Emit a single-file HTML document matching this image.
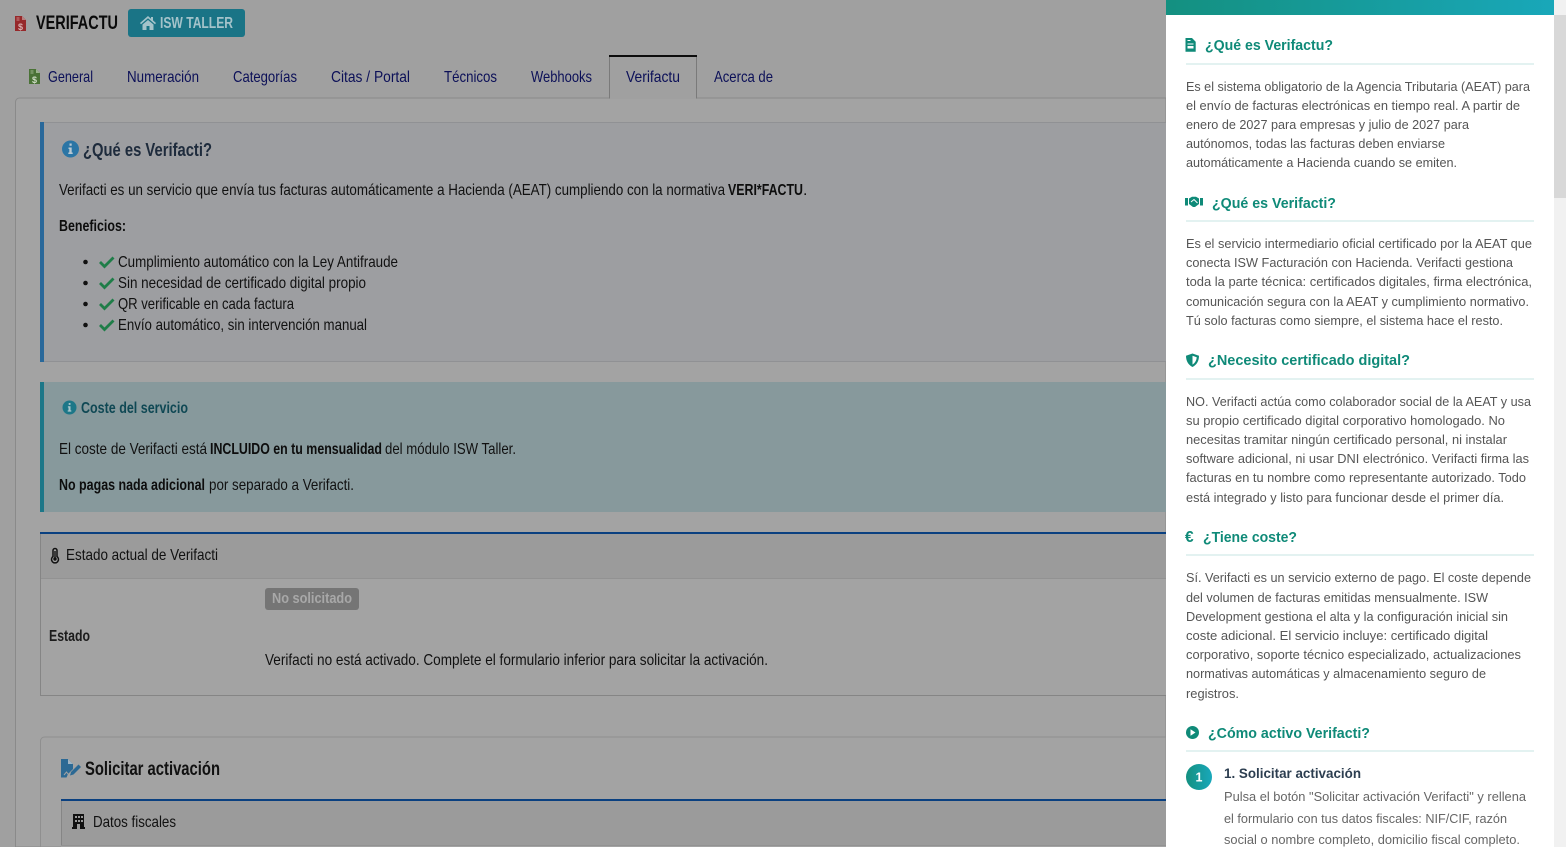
<!DOCTYPE html>
<html lang="es">
<head>
<meta charset="utf-8">
<title>Verifactu</title>
<style>
html,body{margin:0;padding:0;width:1566px;height:847px;overflow:hidden;background:#a0a0a0}
svg{display:block}
text{font-family:"Liberation Sans",Arial,sans-serif;white-space:pre}
.n{font-size:16px;fill:#111}
.b{font-size:16px;font-weight:700;fill:#0d0d0d}
.t{font-size:16px;fill:#0c1058}
.h{font-size:14.5px;font-weight:700;fill:#0f8a78}
.p{font-size:13px;fill:#555}
.s{font-size:13px;fill:#666}
</style>
</head>
<body>
<svg width="1566" height="847" viewBox="0 0 1566 847" xmlns="http://www.w3.org/2000/svg">
<defs>
<linearGradient id="g" x1="0" x2="1" y1="0" y2="0"><stop offset="0" stop-color="#149080"/><stop offset="1" stop-color="#19a8bb"/></linearGradient>
</defs>
<rect width="1566" height="847" fill="#a0a0a0"/>

<!-- page header -->
<path d="M15 16h7l4 4v11H15z" fill="#96282a"/><path d="M22 16v4h4z" fill="#b98080"/>
<rect x="16.500" y="17.500" width="3" height="1" fill="#c98a8a"/><rect x="16.500" y="19.500" width="3" height="1" fill="#c98a8a"/>
<text x="18" y="30" style="font-size:9px;font-weight:700;fill:#d8b0b0">$</text>
<text x="36" y="29" style="font-size:19px;font-weight:700;fill:#0a0a0a" textLength="82" lengthAdjust="spacingAndGlyphs">VERIFACTU</text>
<rect x="128" y="9" width="117" height="28" rx="3" fill="#1a7486"/>
<path d="M148 16l-8 7 1 1.300 7-6 7 6 1-1.300-3-2.600V17h-2v1.700zM142.500 24.500V30h4v-4h3v4h4v-5.500L148 20z" fill="#a4c3ca"/>
<text x="160" y="28" style="font-size:16px;font-weight:700;fill:#a4c3ca" textLength="73" lengthAdjust="spacingAndGlyphs">ISW TALLER</text>

<!-- panel -->
<path d="M15.500 847V102a4 4 0 0 1 4-4H1166V847z" fill="#a3a3a3" stroke="#8a8a8a"/>

<!-- tabs -->
<rect x="609" y="56" width="88" height="43" fill="#a0a0a0"/>
<path d="M609.500 56V98.500M696.500 56V98.500" stroke="#7a7a7a" fill="none"/>
<rect x="609" y="55" width="88" height="2" fill="#0c0c0c"/>
<path d="M29 69h7l4 4v11H29z" fill="#4a7236"/><path d="M36 69v4h4z" fill="#9db48e"/>
<rect x="30.500" y="70.500" width="3" height="1" fill="#9db48e"/><rect x="30.500" y="72.500" width="3" height="1" fill="#9db48e"/>
<text x="32" y="83" style="font-size:9px;font-weight:700;fill:#cfdcc6">$</text>
<text class="t" x="48" y="82" textLength="45" lengthAdjust="spacingAndGlyphs">General</text>
<text class="t" x="127" y="82" textLength="72" lengthAdjust="spacingAndGlyphs">Numeración</text>
<text class="t" x="233" y="82" textLength="64" lengthAdjust="spacingAndGlyphs">Categorías</text>
<text class="t" x="331" y="82" textLength="79" lengthAdjust="spacingAndGlyphs">Citas / Portal</text>
<text class="t" x="444" y="82" textLength="53" lengthAdjust="spacingAndGlyphs">Técnicos</text>
<text class="t" x="531" y="82" textLength="61" lengthAdjust="spacingAndGlyphs">Webhooks</text>
<text class="t" x="626" y="82" textLength="54" lengthAdjust="spacingAndGlyphs">Verifactu</text>
<text class="t" x="714" y="82" textLength="59" lengthAdjust="spacingAndGlyphs">Acerca de</text>

<!-- info box -->
<rect x="40" y="122" width="1126" height="240" fill="#9d9ea1"/>
<rect x="40" y="122" width="1126" height="1" fill="#909194"/>
<rect x="40" y="361" width="1126" height="1" fill="#909194"/>
<rect x="40" y="122" width="4" height="240" fill="#29689a"/>
<circle cx="70.500" cy="149" r="8.500" fill="#2b75a5"/>
<path d="M69.500 143.500h2.200v2.300h-2.200zM68.500 147.500h3.200v5h1v1.500h-4.400v-1.500h1v-3.500h-.8z" fill="#b9c8d2"/>
<text x="83" y="156" style="font-size:18.500px;font-weight:700;fill:#1e2b3c" textLength="129" lengthAdjust="spacingAndGlyphs">¿Qué es Verifacti?</text>
<text class="n" x="59" y="195" textLength="666" lengthAdjust="spacingAndGlyphs">Verifacti es un servicio que envía tus facturas automáticamente a Hacienda (AEAT) cumpliendo con la normativa</text>
<text class="b" x="728" y="195" textLength="75" lengthAdjust="spacingAndGlyphs">VERI*FACTU</text>
<text class="n" x="803" y="195">.</text>
<text class="b" x="59" y="231" textLength="67" lengthAdjust="spacingAndGlyphs">Beneficios:</text>
<g fill="#111"><circle cx="85.500" cy="262" r="2.300"/><circle cx="85.500" cy="283" r="2.300"/><circle cx="85.500" cy="304" r="2.300"/><circle cx="85.500" cy="325" r="2.300"/></g>
<g fill="none" stroke="#1f7d48" stroke-width="2.800">
<path d="M100 262l4.500 4.500 9-9"/><path d="M100 283l4.500 4.500 9-9"/><path d="M100 304l4.500 4.500 9-9"/><path d="M100 325l4.500 4.500 9-9"/>
</g>
<text class="n" x="118" y="267" textLength="280" lengthAdjust="spacingAndGlyphs">Cumplimiento automático con la Ley Antifraude</text>
<text class="n" x="118" y="288" textLength="248" lengthAdjust="spacingAndGlyphs">Sin necesidad de certificado digital propio</text>
<text class="n" x="118" y="309" textLength="176" lengthAdjust="spacingAndGlyphs">QR verificable en cada factura</text>
<text class="n" x="118" y="330" textLength="249" lengthAdjust="spacingAndGlyphs">Envío automático, sin intervención manual</text>

<!-- teal box -->
<rect x="40" y="382" width="1126" height="130" fill="#87999c"/>
<rect x="40" y="382" width="4" height="130" fill="#1d7788"/>
<circle cx="69.500" cy="407.500" r="7" fill="#1d7788"/>
<path d="M68.700 403h1.800v1.900h-1.800zM67.900 406.300h2.600v4.100h.8v1.200h-3.600v-1.200h.8v-2.900h-.6z" fill="#a9c5cb"/>
<text x="81" y="413" style="font-size:16px;font-weight:700;fill:#0f4854" textLength="107" lengthAdjust="spacingAndGlyphs">Coste del servicio</text>
<text class="n" x="59" y="454" textLength="148" lengthAdjust="spacingAndGlyphs">El coste de Verifacti está</text>
<text class="b" x="210" y="454" textLength="172" lengthAdjust="spacingAndGlyphs">INCLUIDO en tu mensualidad</text>
<text class="n" x="385" y="454" textLength="131" lengthAdjust="spacingAndGlyphs">del módulo ISW Taller.</text>
<text class="b" x="59" y="490" textLength="146" lengthAdjust="spacingAndGlyphs">No pagas nada adicional</text>
<text class="n" x="209" y="490" textLength="145" lengthAdjust="spacingAndGlyphs">por separado a Verifacti.</text>

<!-- status card -->
<rect x="40.500" y="533" width="1126" height="162.500" fill="#a3a3a3" stroke="#858585"/>
<rect x="41" y="534" width="1125" height="45" fill="#9b9b9b"/>
<rect x="41" y="578" width="1125" height="1" fill="#929292"/>
<rect x="40" y="532" width="1126" height="2" fill="#0a4080"/>
<path d="M53 550.500a2 2 0 0 1 4 0v6a3.500 3.500 0 1 1-4 0z" fill="#a3a3a3" stroke="#111" stroke-width="1.500"/>
<circle cx="55" cy="559" r="1.700" fill="#111"/><rect x="54.300" y="551" width="1.400" height="7" fill="#111"/>
<text class="n" x="66" y="560" textLength="152" lengthAdjust="spacingAndGlyphs">Estado actual de Verifacti</text>
<rect x="265" y="588" width="94" height="22" rx="3" fill="#757575"/>
<text x="272" y="603" style="font-size:15px;font-weight:700;fill:#a8a8a8" textLength="80" lengthAdjust="spacingAndGlyphs">No solicitado</text>
<text x="49" y="641" style="font-size:16px;font-weight:700;fill:#1c1c1c" textLength="41" lengthAdjust="spacingAndGlyphs">Estado</text>
<text class="n" x="265" y="665" textLength="503" lengthAdjust="spacingAndGlyphs">Verifacti no está activado. Complete el formulario inferior para solicitar la activación.</text>

<!-- request card -->
<path d="M40.500 847V741a4 4 0 0 1 4-4H1166V847z" fill="#a3a3a3" stroke="#8f8f8f"/>
<path d="M61 759h7l5 5v5l-5 5-1.500 3.500H61z" fill="#2c6994"/><path d="M68 759v5h5z" fill="#9fb4c4"/>
<path d="M71 772l7.500-7.500 2.500 2.500-7.500 7.500-3.500 1z" fill="#2c6994"/>
<path d="M64 775l2.500-3 2 2.500 2-1.500" fill="none" stroke="#a3a3a3" stroke-width="1"/>
<text x="85" y="775" style="font-size:19.500px;font-weight:700;fill:#111" textLength="135" lengthAdjust="spacingAndGlyphs">Solicitar activación</text>
<rect x="61.500" y="800" width="1105" height="50" fill="#9b9b9b" stroke="#858585"/>
<rect x="61" y="845" width="1105" height="2" fill="#a3a3a3"/>
<rect x="61" y="845" width="1105" height="1" fill="#929292"/>
<rect x="61" y="799" width="1105" height="2" fill="#0a4080"/>
<path d="M73 814h11v13h1v2H72v-2h1z" fill="#111"/>
<g fill="#9b9b9b"><rect x="75" y="816" width="2" height="2"/><rect x="78" y="816" width="2" height="2"/><rect x="81" y="816" width="2" height="2"/><rect x="75" y="820" width="2" height="2"/><rect x="78" y="820" width="2" height="2"/><rect x="81" y="820" width="2" height="2"/><rect x="77" y="824" width="3" height="5"/></g>
<text class="n" x="93" y="827" textLength="83" lengthAdjust="spacingAndGlyphs">Datos fiscales</text>

<!-- side panel -->
<rect x="1166" y="0" width="388" height="847" fill="#fff"/>
<rect x="1166" y="0" width="400" height="15" fill="url(#g)"/>
<rect x="1554" y="0" width="12" height="847" fill="#f1f1f1"/>
<rect x="1554" y="15" width="12" height="183" fill="#d8d8d8"/>

<g fill="#e3f2f1">
<rect x="1186" y="63" width="348" height="2"/><rect x="1186" y="220" width="348" height="2"/>
<rect x="1186" y="378" width="348" height="2"/><rect x="1186" y="554" width="348" height="2"/>
<rect x="1186" y="750" width="348" height="2"/>
</g>

<!-- s1 -->
<path fill-rule="evenodd" d="M1185.500 38h6.500l3.700 3.700V51.700h-10.200zM1187.500 43.500v1h6v-1zM1187.500 46v2.500h6v-2.500zM1187.500 40v1h3v-1z" fill="#0f8a78"/>
<text class="h" x="1205" y="50" textLength="128" lengthAdjust="spacingAndGlyphs">¿Qué es Verifactu?</text>
<text class="p" x="1186" y="91" textLength="344" lengthAdjust="spacingAndGlyphs">Es el sistema obligatorio de la Agencia Tributaria (AEAT) para</text>
<text class="p" x="1186" y="110" textLength="334" lengthAdjust="spacingAndGlyphs">el envío de facturas electrónicas en tiempo real. A partir de</text>
<text class="p" x="1186" y="129" textLength="283" lengthAdjust="spacingAndGlyphs">enero de 2027 para empresas y julio de 2027 para</text>
<text class="p" x="1186" y="148" textLength="259" lengthAdjust="spacingAndGlyphs">autónomos, todas las facturas deben enviarse</text>
<text class="p" x="1186" y="167" textLength="271" lengthAdjust="spacingAndGlyphs">automáticamente a Hacienda cuando se emiten.</text>

<!-- s2 -->
<path d="M1185 198h3v7.500h-3zM1200 198h3v7.500h-3zM1189 198.500l3-1.700h4l3 1.700v5.500l-4 3h-2l-4-3z" fill="#0f8a78"/>
<path d="M1191 202l3-2.500 3.500 3.500" stroke="#fff" stroke-width="1" fill="none"/>
<text class="h" x="1212" y="208" textLength="124" lengthAdjust="spacingAndGlyphs">¿Qué es Verifacti?</text>
<text class="p" x="1186" y="248" textLength="346" lengthAdjust="spacingAndGlyphs">Es el servicio intermediario oficial certificado por la AEAT que</text>
<text class="p" x="1186" y="267" textLength="327" lengthAdjust="spacingAndGlyphs">conecta ISW Facturación con Hacienda. Verifacti gestiona</text>
<text class="p" x="1186" y="286" textLength="346" lengthAdjust="spacingAndGlyphs">toda la parte técnica: certificados digitales, firma electrónica,</text>
<text class="p" x="1186" y="306" textLength="343" lengthAdjust="spacingAndGlyphs">comunicación segura con la AEAT y cumplimiento normativo.</text>
<text class="p" x="1186" y="325" textLength="317" lengthAdjust="spacingAndGlyphs">Tú solo facturas como siempre, el sistema hace el resto.</text>

<!-- s3 -->
<path fill-rule="evenodd" d="M1192.500 353.500l6.500 2.300c0 5-2.200 9.200-6.500 11.200-4.300-2-6.500-6.200-6.500-11.200zM1192.500 355.800v8.800c2.500-1.500 4-4.300 4.200-7.300z" fill="#0f8a78"/>
<text class="h" x="1208" y="365" textLength="202" lengthAdjust="spacingAndGlyphs">¿Necesito certificado digital?</text>
<text class="p" x="1186" y="406" textLength="345" lengthAdjust="spacingAndGlyphs">NO. Verifacti actúa como colaborador social de la AEAT y usa</text>
<text class="p" x="1186" y="425" textLength="319" lengthAdjust="spacingAndGlyphs">su propio certificado digital corporativo homologado. No</text>
<text class="p" x="1186" y="444" textLength="321" lengthAdjust="spacingAndGlyphs">necesitas tramitar ningún certificado personal, ni instalar</text>
<text class="p" x="1186" y="463" textLength="343" lengthAdjust="spacingAndGlyphs">software adicional, ni usar DNI electrónico. Verifacti firma las</text>
<text class="p" x="1186" y="482" textLength="340" lengthAdjust="spacingAndGlyphs">facturas en tu nombre como representante autorizado. Todo</text>
<text class="p" x="1186" y="502" textLength="318" lengthAdjust="spacingAndGlyphs">está integrado y listo para funcionar desde el primer día.</text>

<!-- s4 -->
<text x="1185" y="542" style="font-size:15.500px;font-weight:700;fill:#0f8a78">€</text>
<text class="h" x="1203" y="542" textLength="94" lengthAdjust="spacingAndGlyphs">¿Tiene coste?</text>
<text class="p" x="1186" y="582" textLength="345" lengthAdjust="spacingAndGlyphs">Sí. Verifacti es un servicio externo de pago. El coste depende</text>
<text class="p" x="1186" y="602" textLength="302" lengthAdjust="spacingAndGlyphs">del volumen de facturas emitidas mensualmente. ISW</text>
<text class="p" x="1186" y="621" textLength="322" lengthAdjust="spacingAndGlyphs">Development gestiona el alta y la configuración inicial sin</text>
<text class="p" x="1186" y="640" textLength="302" lengthAdjust="spacingAndGlyphs">coste adicional. El servicio incluye: certificado digital</text>
<text class="p" x="1186" y="659" textLength="335" lengthAdjust="spacingAndGlyphs">corporativo, soporte técnico especializado, actualizaciones</text>
<text class="p" x="1186" y="678" textLength="300" lengthAdjust="spacingAndGlyphs">normativas automáticas y almacenamiento seguro de</text>
<text class="p" x="1186" y="698" textLength="53" lengthAdjust="spacingAndGlyphs">registros.</text>

<!-- s5 -->
<circle cx="1192.500" cy="732.500" r="6.500" fill="#0f8a78"/>
<path d="M1190.500 729.300l5 3.200-5 3.200z" fill="#fff"/>
<text class="h" x="1208" y="738" textLength="162" lengthAdjust="spacingAndGlyphs">¿Cómo activo Verifacti?</text>
<circle cx="1199" cy="777" r="13" fill="url(#g)"/>
<text x="1199" y="781.500" text-anchor="middle" style="font-size:12.500px;font-weight:700;fill:#fff">1</text>
<text x="1224" y="778" style="font-size:13.500px;font-weight:700;fill:#2c3e50" textLength="137" lengthAdjust="spacingAndGlyphs">1. Solicitar activación</text>
<text class="s" x="1224" y="801" textLength="302" lengthAdjust="spacingAndGlyphs">Pulsa el botón "Solicitar activación Verifacti" y rellena</text>
<text class="s" x="1224" y="823" textLength="283" lengthAdjust="spacingAndGlyphs">el formulario con tus datos fiscales: NIF/CIF, razón</text>
<text class="s" x="1224" y="844" textLength="296" lengthAdjust="spacingAndGlyphs">social o nombre completo, domicilio fiscal completo.</text>
</svg>
</body>
</html>
